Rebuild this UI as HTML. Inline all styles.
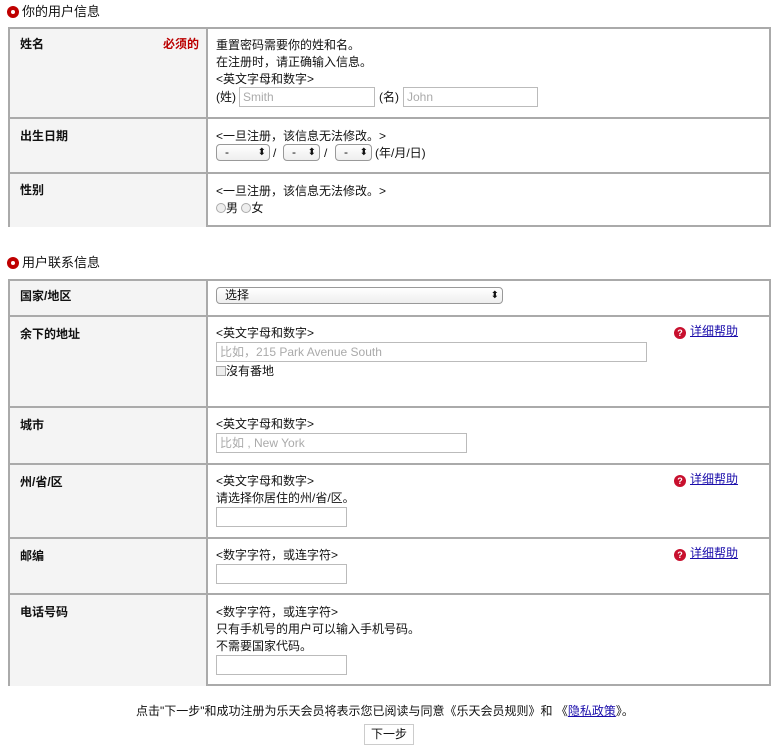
<!DOCTYPE html>
<html><head><meta charset="utf-8"><style>
*{margin:0;padding:0;box-sizing:border-box}
body{width:781px;height:751px;background:#fff;font-family:"Liberation Sans","Noto Sans CJK SC",sans-serif;font-size:12px;color:#111;position:relative;overflow:hidden}
.a{position:absolute;white-space:nowrap;line-height:17px}
.h{position:absolute;left:7px;font-size:13px;line-height:17px}
.dot{display:inline-block;width:12px;height:12px;border-radius:50%;background:#bf0000;vertical-align:-2px;margin-right:3px;position:relative}
.dot:after{content:"";position:absolute;left:4px;top:4px;width:4px;height:4px;border-radius:50%;background:#fff}
.tbl{position:absolute;left:8px;width:763px;border:2px solid #aaa}
.row{position:absolute;left:0;right:0;border-top:2px solid #aaa}
.lab{position:absolute;left:0;top:0;bottom:0;width:198px;background:#f4f4f4;border-right:2px solid #aaa}
.lt{position:absolute;left:10px;top:8px;font-weight:600;font-size:12px}
.inp{position:absolute;border:1px solid #bbb;height:20px;color:#aaa;padding-left:3px;line-height:18px;font-size:12px;background:#fff}
.sel{position:absolute;border:1px solid #999;border-radius:4px;height:17px;background:linear-gradient(#fff,#eee);font-size:12px;line-height:15px;padding-left:8px;text-align:left}
.sel:after{content:"⬍";position:absolute;right:3px;top:0;font-size:10px}
.help{position:absolute;left:674px;color:#1a0dab;text-decoration:underline}
.q{display:inline-block;width:12px;height:12px;border-radius:50%;background:#c8102e;color:#fff;font-size:9px;font-weight:bold;text-align:center;line-height:12px;text-decoration:none;margin-right:4px;vertical-align:-1px}
.rad{display:inline-block;width:10px;height:10px;border:1px solid #aaa;border-radius:50%;background:#eee;vertical-align:-1px}
</style></head><body>
<div class="h" style="top:3px"><span class="dot"></span>你的用户信息</div>
<div class="tbl" style="top:27px;height:200px">
 <div class="row" style="top:0;height:89px;border-top:0"><div class="lab"><span class="lt a" style="top:7px">姓名</span><span class="a" style="left:153px;top:7px;color:#b00;font-weight:600">必须的</span></div></div>
 <div class="row" style="top:88px;height:55px"><div class="lab"><span class="lt a" style="top:9px">出生日期</span></div></div>
 <div class="row" style="top:143px;height:55px"><div class="lab"><span class="lt a" style="top:8px">性别</span></div></div>
</div>
<div class="a" style="left:216px;top:37px">重置密码需要你的姓和名。</div>
<div class="a" style="left:216px;top:54px">在注册时，请正确输入信息。</div>
<div class="a" style="left:216px;top:71px">&lt;英文字母和数字&gt;</div>
<div class="a" style="left:216px;top:89px">(姓)</div>
<div class="inp" style="left:239px;top:87px;width:136px">Smith</div>
<div class="a" style="left:379px;top:89px">(名)</div>
<div class="inp" style="left:403px;top:87px;width:135px">John</div>
<div class="a" style="left:216px;top:128px">&lt;一旦注册，该信息无法修改。&gt;</div>
<div class="sel" style="left:216px;top:144px;width:54px">-</div><div class="a" style="left:273px;top:145px">/</div>
<div class="sel" style="left:283px;top:144px;width:37px">-</div><div class="a" style="left:324px;top:145px">/</div>
<div class="sel" style="left:335px;top:144px;width:37px">-</div><div class="a" style="left:375px;top:145px">(年/月/日)</div>
<div class="a" style="left:216px;top:183px">&lt;一旦注册，该信息无法修改。&gt;</div>
<div class="a" style="left:216px;top:200px"><span class="rad"></span>男 <span class="rad"></span>女</div>

<div class="h" style="top:254px"><span class="dot"></span>用户联系信息</div>
<div class="tbl" style="top:279px;height:407px">
 <div class="row" style="top:0;height:34px;border-top:0"><div class="lab"><span class="lt a" style="top:7px">国家/地区</span></div></div>
 <div class="row" style="top:34px;height:92px"><div class="lab"><span class="lt a" style="top:9px">余下的地址</span></div></div>
 <div class="row" style="top:125px;height:57px"><div class="lab"><span class="lt a" style="top:9px">城市</span></div></div>
 <div class="row" style="top:182px;height:74px"><div class="lab"><span class="lt a" style="top:9px">州/省/区</span></div></div>
 <div class="row" style="top:256px;height:56px"><div class="lab"><span class="lt a" style="top:9px">邮编</span></div></div>
 <div class="row" style="top:312px;height:93px"><div class="lab"><span class="lt a" style="top:9px">电话号码</span></div></div>
</div>
<div class="sel" style="left:216px;top:287px;width:287px">选择</div>
<div class="a" style="left:216px;top:325px">&lt;英文字母和数字&gt;</div>
<div class="help a" style="top:323px"><span class="q">?</span>详细帮助</div>
<div class="inp" style="left:216px;top:342px;width:431px">比如，215 Park Avenue South</div>
<div class="a" style="left:216px;top:363px"><span style="display:inline-block;width:10px;height:10px;border:1px solid #aaa;background:#eee;vertical-align:-1px"></span>沒有番地</div>
<div class="a" style="left:216px;top:416px">&lt;英文字母和数字&gt;</div>
<div class="inp" style="left:216px;top:433px;width:251px">比如 , New York</div>
<div class="a" style="left:216px;top:473px">&lt;英文字母和数字&gt;</div>
<div class="help a" style="top:471px"><span class="q">?</span>详细帮助</div>
<div class="a" style="left:216px;top:490px">请选择你居住的州/省/区。</div>
<div class="inp" style="left:216px;top:507px;width:131px"></div>
<div class="a" style="left:216px;top:547px">&lt;数字字符，或连字符&gt;</div>
<div class="help a" style="top:545px"><span class="q">?</span>详细帮助</div>
<div class="inp" style="left:216px;top:564px;width:131px"></div>
<div class="a" style="left:216px;top:604px">&lt;数字字符，或连字符&gt;</div>
<div class="a" style="left:216px;top:621px">只有手机号的用户可以输入手机号码。</div>
<div class="a" style="left:216px;top:638px">不需要国家代码。</div>
<div class="inp" style="left:216px;top:655px;width:131px"></div>

<div class="a" style="left:136px;top:703px">点击"下一步"和成功注册为乐天会员将表示您已阅读与同意《乐天会员规则》和 《<span style="color:#1a0dab;text-decoration:underline">隐私政策</span>》。</div>
<div class="a" style="left:364px;top:724px;width:50px;height:21px;border:1px solid #ccc;text-align:center;line-height:19px">下一步</div>
</body></html>
